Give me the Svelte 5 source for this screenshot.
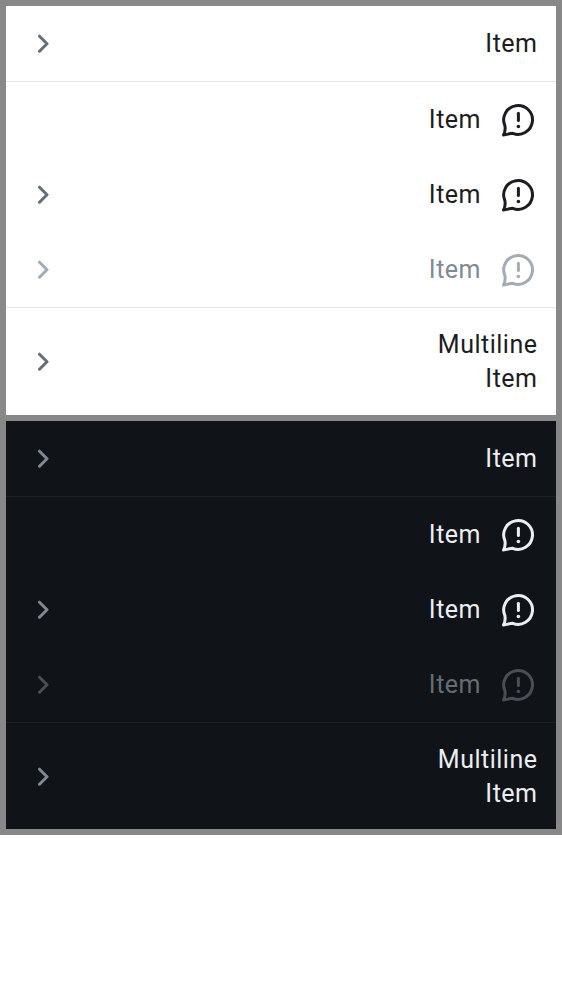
<script>
  const rows = [
    { text: 'Item', chevron: true, line: true, height: 76 },
    { text: 'Item', icon: true, height: 75 },
    { text: 'Item', icon: true, chevron: true, height: 75 },
    { text: 'Item', icon: true, chevron: true, disabled: true, line: true, height: 76 },
    { text: 'Multiline\nItem', chevron: true, multiline: true, height: 107 },
  ];
</script>

<main>
  {#each ['light', 'dark'] as theme}
    <section class={theme}>
      {#each rows as row}
        <div class="row" class:line={row.line} class:disabled={row.disabled} class:multiline={row.multiline} style:height="{row.height}px">
          {#if row.chevron}
            <svg class="chevron" width="14" height="19" viewBox="0 0 14 19"><path d="M3.5 2.2 11 9.7 3.5 17.2" /></svg>
          {/if}
          <span>{row.text}</span>
          {#if row.icon}
            <svg class="bubble" width="38" height="37" viewBox="0 -.5 38 37">
              <path d="M3.5 33.5C5.2 30.5 5.5 27.7 4.9 24.2A14.4 14.4 0 1 1 12.8 31.8C9.7 31.8 7.2 33.1 3.5 33.5Z" />
              <path d="M18.4 11.8V19.1" />
              <circle cx="18.4" cy="25" r="1.8" />
            </svg>
          {/if}
        </div>
      {/each}
    </section>
  {/each}
</main>

<style>
  :global(body) { background: #fff; }
  main { display: flex; flex-direction: column; gap: 6px; padding: 6px; background: #888; height: 823px; }
  section { font: 25px/34.5px Roboto, sans-serif; letter-spacing: .5px; }
  .light { --text: #1b1d22; --icon: #1b1d22; --chevron: #656d77; --line: #e1e6e8; background: #fff; height: 409px; }
  .dark { --text: #ebeef2; --icon: #ebeef2; --chevron: #808994; --line: #1d2126; background: #101317; height: 408px; }
  .light .disabled { --text: #808994; --icon: #a3abb5; --chevron: #a3abb5; }
  .dark .disabled { --text: #656c76; --icon: #4a4f55; --chevron: #4a4f55; }
  .row { display: flex; align-items: center; box-sizing: border-box; padding: 0 18.5px 0 30px; color: var(--text); }
  .line { border-bottom: 1px solid var(--line); }
  span { margin-left: auto; padding-top: 2px; text-align: right; white-space: pre-line; }
  .multiline span { padding-top: 1px; }
  .multiline .chevron { margin-bottom: 1px; }
  svg { fill: none; stroke-width: 3; stroke-linecap: round; stroke-linejoin: round; }
  .chevron { stroke: var(--chevron); }
  .bubble { margin: 0 -.5px 0 19px; stroke: var(--icon); }
  circle { fill: var(--icon); stroke: none; }
</style>
